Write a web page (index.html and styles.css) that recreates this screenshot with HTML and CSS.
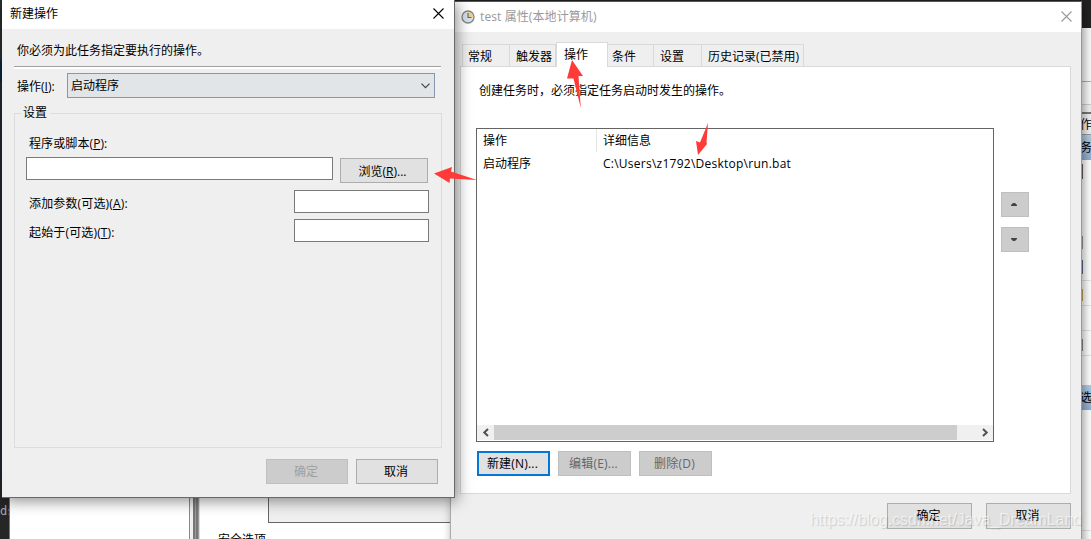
FILE: index.html
```html
<!DOCTYPE html>
<html lang="zh-CN">
<head>
  <meta charset="UTF-8">
  <meta name="viewport" content="width=device-width, initial-scale=1.0">
  <title>新建操作</title>
  <link rel="stylesheet" href="styles.css">
</head>
<body>
  <div class="desktop">
    <!-- 编辑器 -->
    <div class="editor"><span>ds</span></div>

    <!-- 任务计划程序 -->
    <div class="scheduler">
      <div class="tree"></div>
      <div class="splitter"></div>
      <div class="detail">
        <div class="detail-box"></div>
        <div class="detail-title">安全选项</div>
      </div>
    </div>
    <div class="actions">
      <div class="actions-top"></div>
      <div class="actions-bar"></div>
      <div class="actions-line"></div>
      <div class="actions-head">作</div>
      <div class="actions-group">务</div>
      <div class="actions-list">
        <i class="mark red"></i>
        <i class="mark gray"></i>
        <i class="mark blue"></i>
      </div>
      <div class="actions-item"><i class="mark gold"></i></div>
      <div class="actions-item"></div>
      <div class="actions-item"><i class="mark dark"></i></div>
      <div class="actions-gap"></div>
      <div class="actions-group">选</div>
      <div class="actions-rest"></div>
    </div>

    <!-- 属性窗口 -->
    <div class="window props">
      <div class="titlebar">
        <svg class="clock" width="14" height="14" viewBox="0 0 14 14">
          <circle cx="7" cy="7" r="6" fill="#d3e2ee" stroke="#858585" stroke-width="1.3"/>
          <path d="M7 7V2A5 5 0 0 1 12 7Z" fill="#f1cf83"/>
          <path d="M7 3V7.5H10.5" fill="none" stroke="#5d6873" stroke-width="1.1"/>
        </svg>
        <span class="title">test 属性(本地计算机)</span>
        <svg class="close" width="11" height="11" viewBox="0 0 11 11"><path d="M.5 .5L10.5 10.5M10.5 .5L.5 10.5"/></svg>
      </div>
      <div class="tabs">
        <div class="tab tab-general">常规</div>
        <div class="tab tab-trigger">触发器</div>
        <div class="tab tab-action active">操作</div>
        <div class="tab tab-condition">条件</div>
        <div class="tab tab-setting">设置</div>
        <div class="tab tab-history">历史记录(已禁用)</div>
      </div>
      <div class="panel">
        <p class="hint">创建任务时，必须指定任务启动时发生的操作。</p>
        <div class="list-row">
          <div class="list">
            <div class="row head"><span class="col">操作</span><span>详细信息</span></div>
            <div class="row"><span class="col">启动程序</span><span class="path">C:\Users\z1792\Desktop\run.bat</span></div>
            <div class="scrollbar">
              <svg width="17" height="15" viewBox="0 0 17 15"><path d="M11 4L7.3 7.5L11 11"/></svg>
              <div class="thumb"></div>
              <svg width="36" height="15" viewBox="0 0 36 15"><path d="M26 4L29.7 7.5L26 11"/></svg>
            </div>
          </div>
          <div class="order">
            <button class="btn disabled"><svg width="6" height="3" viewBox="0 0 6 3"><path d="M0 3V2L2 0H4L6 2V3Z"/></svg></button>
            <button class="btn disabled"><svg width="6" height="3" viewBox="0 0 6 3"><path d="M0 0V1L2 3H4L6 1V0Z"/></svg></button>
          </div>
        </div>
        <div class="buttons">
          <button class="btn primary">新建(N)...</button>
          <button class="btn disabled">编辑(E)...</button>
          <button class="btn disabled">删除(D)</button>
        </div>
      </div>
      <div class="footer">
        <button class="btn">确定</button>
        <button class="btn">取消</button>
      </div>
    </div>

    <!-- 新建操作窗口 -->
    <div class="window dialog">
      <div class="titlebar">
        <span class="title">新建操作</span>
        <svg class="close" width="11" height="11" viewBox="0 0 11 11"><path d="M.5 .5L10.5 10.5M10.5 .5L.5 10.5"/></svg>
      </div>
      <div class="content">
        <p class="message">你必须为此任务指定要执行的操作。</p>
        <div class="line"></div>
        <div class="field action-field">
          <label>操作(<u>I</u>):</label>
          <div class="select">
            <span>启动程序</span>
            <svg width="9" height="6" viewBox="0 0 9 6"><path d="M.5 .7L4.5 4.7L8.5 .7"/></svg>
          </div>
        </div>
        <fieldset class="group">
          <legend>设置</legend>
          <label class="script-label">程序或脚本(<u>P</u>):</label>
          <div class="script-row">
            <input type="text" class="script">
            <button class="btn browse"><span>浏览(<u>R</u>)...</span></button>
          </div>
          <div class="options">
            <div class="field option">
              <label>添加参数(可选)(<u>A</u>):</label>
              <input type="text">
            </div>
            <div class="field option">
              <label>起始于(可选)(<u>T</u>):</label>
              <input type="text">
            </div>
          </div>
        </fieldset>
        <div class="dialog-footer">
          <button class="btn disabled faint">确定</button>
          <button class="btn">取消</button>
        </div>
      </div>
    </div>

    <!-- 标注箭头 -->
    <svg class="arrows" width="1091" height="539" viewBox="0 0 1091 539">
      <path d="M572 60L583 76L578.5 76L580.8 108L573.5 78.5L567 78.5Z"/>
      <path d="M708 123L706.5 142.5L707 144L698 155L696 141L700 142.5Z"/>
      <path d="M434 173.5L452 167L451 171.5L477 180L450 178.5L449.5 183Z"/>
    </svg>
    <div class="watermark">https://blog.csdn.net/Java_DreamLand</div>
  </div>
</body>
</html>
```
FILE: styles.css
```css
* {
  box-sizing: border-box;
}
body {
  margin: 0;
  font-family: "Open Sans", "Noto Sans CJK SC", sans-serif;
  font-size: 12px;
  line-height: 16px;
  color: #000;
}
p {
  margin: 0;
}
u {
  text-underline-offset: 1px;
}
.desktop {
  position: relative;
  width: 1091px;
  height: 539px;
  overflow: hidden;
  background-color: #222;
}

/* 背景窗口 */
.editor {
  position: absolute;
  left: 0;
  top: 0;
  width: 9px;
  height: 539px;
  padding-top: 503px;
  overflow: hidden;
  background: linear-gradient(#282d31 0, #282d31 60px, #082541 61px, #082541 81px, #222a31 82px, #222a31 470px, #262626 490px);
  color: #aaa;
  font-family: "DejaVu Sans Mono", monospace;
}
.scheduler {
  position: absolute;
  left: 9px;
  top: 29px;
  width: 442px;
  height: 510px;
  display: flex;
  background-color: #fff;
  border-left: 1px solid #777;
}
.tree {
  width: 180px;
  border-right: 1px solid #888;
}
.splitter {
  width: 10px;
  border-left: 3px solid #f0f0f0;
  border-right: 1px solid #ddd;
  background: repeating-linear-gradient(90deg, #777 0, #777 2px, #999 2px, #999 3px);
}
.detail {
  flex: 1;
  padding-left: 18px;
}
.detail-box {
  height: 494px;
  margin-left: 50px;
  background-color: #efefef;
  border: 1px solid #666;
  border-right: none;
}
.detail-title {
  margin-top: 9px;
}
.actions {
  position: absolute;
  left: 1080px;
  top: 28px;
  width: 11px;
  height: 511px;
  overflow: hidden;
  background-color: #fff;
}
.actions-top {
  height: 54px;
  border-bottom: 1px solid #aab;
  background-color: #fafafa;
}
.actions-bar {
  height: 23px;
  border-bottom: 1px solid #ccc;
  background-color: #f9f9fc;
}
.actions-line {
  height: 9px;
  background-color: #f0f0f0;
  border-bottom: 2px solid #777;
}
.actions-head {
  height: 21px;
  line-height: 22px;
  background-color: #f0f0f0;
  border-bottom: 1px solid #999;
}
.actions-group {
  height: 25px;
  line-height: 26px;
  background: linear-gradient(#b4cbe6, #91aed0);
}
.actions-list {
  height: 121px;
  padding-top: 4px;
  border-bottom: 1px solid #e3e3e3;
}
.mark {
  display: block;
  width: 3px;
  height: 15px;
}
.mark.red {
  background-color: #6b5a5a;
}
.mark.gray {
  height: 13px;
  margin-top: 57px;
  background-color: #999;
}
.mark.blue {
  height: 14px;
  margin-top: 11px;
  background-color: #5b6a90;
}
.mark.gold {
  width: 3px;
  height: 12px;
  background-color: #c9a55a;
}
.mark.dark {
  height: 12px;
  background-color: #888;
}
.actions-item {
  height: 25px;
  padding-top: 8px;
  border-bottom: 1px solid #e3e3e3;
}
.actions-gap {
  height: 29px;
}
.actions-rest {
  height: 121px;
  border-bottom: 1px solid #e3e3e3;
}

/* 窗口通用样式 */
.window {
  position: absolute;
  background-color: #efefef;
}
.titlebar {
  display: flex;
  align-items: center;
  background-color: #fff;
}
.title {
  flex: 1;
}
.close {
  fill: none;
  stroke: #000;
  stroke-width: 1.1;
}
.btn {
  display: flex;
  align-items: center;
  justify-content: center;
  padding: 0 2px 0 0;
  border: 1px solid #adadad;
  border-radius: 0;
  background-color: #e1e1e1;
  color: #000;
  font: inherit;
}
.btn.disabled {
  background-color: #ccc;
  border-color: #bfbfbf;
  color: #666;
}
.btn.faint {
  color: #a0a0a0;
}
.btn.primary {
  border: 2px solid #0078d7;
}
input {
  width: 135px;
  height: 23px;
  padding: 0;
  border: 1px solid #7a7a7a;
  background-color: #fff;
  font: inherit;
}

/* 属性窗口 */
.props {
  left: 450px;
  top: 1px;
  width: 632px;
  height: 560px;
  border: 1px solid #555;
  border-left-color: #aaa;
  border-right-color: #999;
  box-shadow: 2px 2px 9px rgba(0,0,0,0.4);
}
.props .titlebar {
  height: 30px;
  padding: 0 9px 1px 10px;
  color: #999;
}
.props .close {
  stroke: #999;
}
.props .title {
  padding-top: 1px;
  letter-spacing: 0.1px;
}
.clock {
  margin-right: 5px;
}
.tabs {
  display: flex;
  align-items: flex-end;
  height: 34px;
  padding-left: 11px;
}
.tab {
  height: 22px;
  padding: 4px 0 0 5px;
  border: 1px solid #d9d9d9;
  border-left: none;
  border-bottom: none;
}
.tab-general {
  width: 48px;
  border-left: 1px solid #d9d9d9;
}
.tab-trigger {
  width: 46px;
  padding-left: 6px;
}
.tab-action {
  width: 52px;
}
.tab-condition {
  width: 46px;
  padding-left: 4px;
}
.tab-setting {
  width: 48px;
  padding-left: 6px;
}
.tab-history {
  width: 102px;
  padding-left: 6px;
  white-space: nowrap;
}
.tab.active {
  z-index: 1;
  height: 25px;
  margin-bottom: -1px;
  padding: 4px 0 0 7px;
  background-color: #fff;
  border-left: 1px solid #d9d9d9;
}
.panel {
  width: 611px;
  height: 428px;
  margin-left: 9px;
  padding: 16px 0 0 15px;
  border: 1px solid #d9d9d9;
  background-color: #fff;
}
.hint {
  padding-left: 3px;
}
.list-row {
  display: flex;
  margin-top: 29px;
}
.list {
  display: flex;
  flex-direction: column;
  width: 518px;
  height: 314px;
  border: 1px solid #646464;
}
.row {
  display: flex;
  height: 23px;
  padding-left: 6px;
  line-height: 23px;
}
.col {
  width: 114px;
  margin-right: 6px;
}
.head .col {
  border-right: 1px solid #e5e5e5;
}
.path {
  letter-spacing: 0.25px;
}
.scrollbar {
  display: flex;
  height: 15px;
  margin: auto 0 1px;
  background-color: #f0f0f0;
}
.scrollbar svg {
  fill: none;
  stroke: #505050;
  stroke-width: 2;
}
.thumb {
  flex: 1;
  background-color: #cdcdcd;
}
.order {
  display: flex;
  flex-direction: column;
  gap: 10px;
  margin: 64px 0 0 7px;
}
.order .btn {
  width: 28px;
  height: 25px;
  fill: #444;
}
.buttons {
  display: flex;
  gap: 8px;
  margin: 9px 0 0 1px;
}
.buttons .btn {
  width: 73px;
  height: 25px;
  letter-spacing: 0.2px;
}
.footer {
  display: flex;
  justify-content: flex-end;
  gap: 14px;
  padding: 9px 10px 0 0;
}
.footer .btn {
  width: 85px;
  height: 26px;
}

/* 新建操作窗口 */
.dialog {
  left: 2px;
  top: 0;
  width: 453px;
  height: 498px;
  border-right: 1px solid #696969;
  border-bottom: 1px solid #696969;
  box-shadow: 2px 3px 14px rgba(0,0,0,0.45);
}
.dialog .titlebar {
  height: 29px;
  padding: 0 10px 3px 8px;
}
.dialog .title {
  padding-top: 2px;
}
.content {
  padding: 14px 12px 0;
}
.message {
  padding-left: 3px;
}
.line {
  height: 3px;
  width: 427px;
  margin-top: 7px;
  background-color: #fff;
  border-top: 1px solid #a0a0a0;
}
.field {
  display: flex;
  align-items: center;
}
.action-field {
  margin-top: 4px;
  padding-left: 3px;
}
.action-field label {
  width: 50px;
  padding-top: 2px;
}
.select {
  display: flex;
  align-items: center;
  justify-content: space-between;
  width: 368px;
  height: 25px;
  padding: 0 4px 0 3px;
  border: 1px solid #8398ae;
  background-color: #e1e5e8;
}
.select svg {
  fill: none;
  stroke: #444;
  stroke-width: 1.2;
}
.group {
  width: 428px;
  height: 343px;
  margin: 7px 0 0;
  padding: 15px 12px 0 11px;
  border: 1px solid #dcdcdc;
}
.group legend {
  margin-left: -5px;
  padding: 0 3px 0 2px;
}
.script-label {
  display: block;
  padding-left: 3px;
  letter-spacing: 0.1px;
}
.script-row {
  display: flex;
  align-items: flex-start;
  gap: 7px;
  margin-top: 5px;
}
.script {
  width: 307px;
}
.browse {
  width: 88px;
  height: 25px;
  margin-top: 1px;
  padding: 2px 3px 0 0;
}
.options {
  display: flex;
  flex-direction: column;
  gap: 6px;
  margin-top: 7px;
}
.option {
  justify-content: space-between;
  padding-left: 3px;
}
.option label {
  padding-top: 5px;
  letter-spacing: 0.15px;
}
.dialog-footer {
  display: flex;
  justify-content: flex-end;
  gap: 8px;
  margin-top: 11px;
  padding-right: 4px;
}
.dialog-footer .btn {
  width: 82px;
  height: 25px;
}

/* 箭头和水印 */
.arrows {
  position: absolute;
  left: 0;
  top: 0;
  z-index: 2;
  fill: #ff3b38;
}
.watermark {
  position: absolute;
  left: 810px;
  top: 511px;
  z-index: 2;
  color: rgba(255,255,255,0.6);
  font-family: "Liberation Sans", Arial, sans-serif;
  font-size: 15.9px;
  line-height: 18px;
  white-space: nowrap;
  text-shadow: 1px 1px 1px rgba(0,0,0,0.15);
}
```
